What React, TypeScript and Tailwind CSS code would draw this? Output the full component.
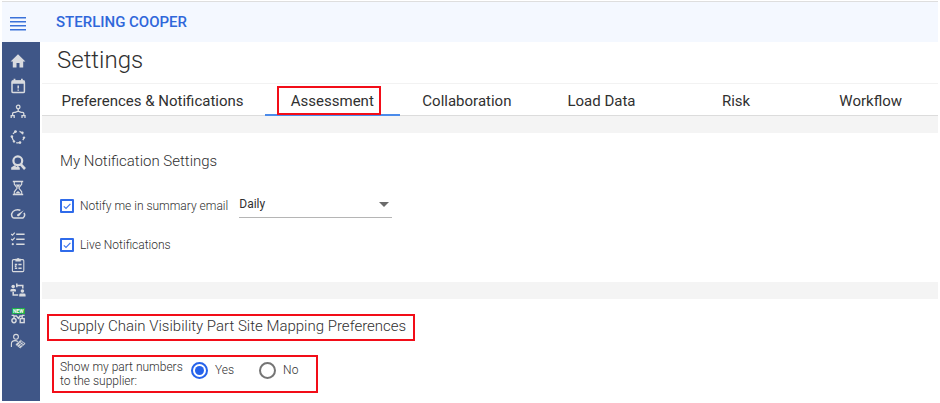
import { useState } from "react";
import type { ReactNode } from "react";

type NavItem = {
  label: string;
  icon: ReactNode;
};

const navItems: NavItem[] = [
  {
    label: "Home",
    icon: <path fill="currentColor" stroke="none" d="M8 1.2 15.4 8.4H13.2V14.6H9.5V10H6.5V14.6H2.8V8.4H.6Z" />,
  },
  {
    label: "Calendar",
    icon: (
      <>
        <rect x="2" y="3" width="12.4" height="11.6" rx="1.2" strokeWidth="1.5" />
        <path fill="currentColor" stroke="none" d="M1.8 2.6H14.6V5.8H1.8ZM3.6 .8H5.4V3H3.6ZM11 .8H12.8V3H11Z" />
        <path strokeWidth="1.5" d="M8.2 7.4V10.6M8.2 11.5V12.8" />
      </>
    ),
  },
  {
    label: "Hierarchy",
    icon: (
      <>
        <circle cx="8.2" cy="3" r="1.8" strokeWidth="1.3" />
        <path strokeWidth="1.3" d="M8.2 5V8M2.6 11V9.6Q2.6 8.4 4 8.4H5.2L8.2 7.2 11.2 8.4H12.6Q13.8 8.4 13.8 9.6V11" />
        <path strokeWidth="1.3" d="M1.2 14V11.6H4.2V14M12 14V11.6H15V14" />
      </>
    ),
  },
  {
    label: "Network",
    icon: (
      <>
        <circle cx="8" cy="8" r="5.8" strokeWidth="1.3" strokeDasharray="4.4 2.9" strokeDashoffset="1" />
        <g fill="currentColor" stroke="none">
          <circle cx="5.4" cy="2.6" r="1.3" />
          <circle cx="12.4" cy="3.6" r="1.2" />
          <circle cx="14" cy="8.6" r="1.2" />
          <circle cx="10" cy="13.6" r="1.3" />
          <circle cx="4" cy="12.4" r="1.2" />
          <circle cx="1.9" cy="7.6" r="1.3" />
        </g>
      </>
    ),
  },
  {
    label: "Supplier search",
    icon: (
      <>
        <circle cx="7.8" cy="5.8" r="4.4" strokeWidth="2.2" />
        <path strokeWidth="2.6" d="M10.8 9.4 15 14" />
        <path fill="currentColor" stroke="none" d="M1.2 14.8V12.6L4.6 10.2 6.4 12 7.8 10.8 9.8 12.8V14.8Z" />
      </>
    ),
  },
  {
    label: "Pending",
    icon: (
      <>
        <path strokeWidth="1.5" d="M2.8 1.5H13.2M2.8 14.5H13.2" />
        <path d="M4.3 2V4.2L7.2 8 4.3 11.8V14M11.7 2V4.2L8.8 8 11.7 11.8V14" />
        <path fill="currentColor" stroke="none" d="M5.6 4.5H10.4L8 7.4ZM5 13.6 8 11 11 13.6Z" />
      </>
    ),
  },
  {
    label: "Performance",
    icon: (
      <>
        <path strokeWidth="1.5" d="M3.2 12H13C14.8 10.6 15 8.6 14 6.9M10.4 4.2C7 2.9 3 4.2 1.8 7.4 1.2 9.4 2 11 3.2 12" />
        <path fill="currentColor" stroke="none" d="M13.8 4.2 9.2 10A1.3 1.3 0 0 1 7.2 8.4Z" />
      </>
    ),
  },
  {
    label: "Tasks",
    icon: (
      <>
        <path strokeWidth="1.4" d="M6.2 3.2H14.6M6.2 8.2H14.6M6.2 13.2H14.6" />
        <path strokeWidth="1.2" d="M1.2 3 2.5 4.2 4.8 1.7M1.2 8 2.5 9.2 4.8 6.7" />
        <circle cx="2.8" cy="13.2" r="1.1" fill="currentColor" stroke="none" />
      </>
    ),
  },
  {
    label: "Reports",
    icon: (
      <>
        <rect x="2.4" y="2.6" width="11.4" height="12" rx="1.2" />
        <path fill="currentColor" stroke="none" d="M5.4 1.8H6.8A1.4 1.4 0 0 1 9.4 1.8H10.8V4.4H5.4Z" />
        <path strokeWidth="1.5" d="M4.8 7.4H7.2M8.4 7.4H11.6M4.8 11.2H7.2M8.4 11.2H11.6M4.8 9.3H6.4" />
      </>
    ),
  },
  {
    label: "Collaboration",
    icon: (
      <>
        <g fill="currentColor" stroke="none">
          <circle cx="3.2" cy="4.6" r="1.8" />
          <path d="M.4 9.4V8.2Q.4 7 1.8 7H4.6Q6 7 6 8.2V9.4Z" />
          <circle cx="12.4" cy="9" r="1.8" />
          <path d="M9.2 14.4V13Q9.2 11.6 10.6 11.6H14.2Q15.6 11.6 15.6 13V14.4Z" />
        </g>
        <path strokeWidth="1.5" d="M6.4 3.4H12.8V6.4M3.2 10V13H8.2M6.8 1.6V5.2" />
      </>
    ),
  },
  {
    label: "Supply chain visibility",
    icon: (
      <>
        <circle cx="4" cy="12.6" r="2.1" strokeWidth="1.4" />
        <rect x="10.2" y="10.6" width="4" height="4" strokeWidth="1.4" />
        <path strokeWidth="1.4" d="M4 10.4V8H6.4L8.4 10.4 10 8H12.2V10.4M1.6 7.4H4M12 7.4H14.6" />
      </>
    ),
  },
  {
    label: "Partners",
    icon: (
      <>
        <circle cx="6" cy="3.8" r="2.4" />
        <path d="M1.4 14V11Q1.4 7.6 5 7.6 6.8 7.6 7.8 8.6" />
        <path fill="currentColor" strokeWidth=".6" d="M5.8 11.6 10.6 7.2 15.2 10.6 10.2 15Z" />
        <path stroke="#3f5687" strokeWidth=".7" d="M7.6 12.4 12.4 8.6M9.2 13.6 14 9.8M8.8 9.6 12.6 12.8M10.6 8.2 14 11" />
      </>
    ),
  },
];

const tabs = ["Assessment", "Collaboration", "Load Data", "Risk", "Workflow"];

function Sidebar() {
  return (
    <nav className="w-[38px] shrink-0 bg-[#3f5687] pt-[11px] pr-1.5 pb-[52px]">
      <ul className="flex h-[296px] flex-col items-center justify-between">
        {navItems.map((item) => (
          <li key={item.label} className="relative h-4 w-4">
            <a href="#" aria-label={item.label} className="block text-[#d9dbdf]">
              <svg viewBox="0 0 16 16" className="h-4 w-4" fill="none" stroke="currentColor" strokeWidth="1.1">
                {item.icon}
              </svg>
            </a>
            {item.label === "Supply chain visibility" && (
              <span className="absolute top-0 left-[2px] bg-[#1fae4b] px-px text-[5px] leading-[6px] font-bold text-white">
                NEW
              </span>
            )}
          </li>
        ))}
      </ul>
    </nav>
  );
}

type CheckboxProps = {
  id: string;
  label: string;
  checked: boolean;
  onChange: (checked: boolean) => void;
};

function Checkbox({ id, label, checked, onChange }: CheckboxProps) {
  return (
    <div className="flex items-center gap-1.5">
      <span className="relative h-[14px] w-[14px]">
        <input
          id={id}
          type="checkbox"
          checked={checked}
          onChange={(e) => onChange(e.target.checked)}
          className="block h-[14px] w-[14px] appearance-none rounded-[1px] border-2 border-[#2f6bea] bg-white"
        />
        {checked && (
          <svg viewBox="0 0 14 14" className="pointer-events-none absolute inset-0 h-[14px] w-[14px]" fill="none" stroke="#3f76ec" strokeWidth="1.2">
            <path d="M3.8 7.4 6 9.5 10.4 4.8" />
          </svg>
        )}
      </span>
      <label htmlFor={id} className="text-xs font-light">
        {label}
      </label>
    </div>
  );
}

type RadioProps = {
  label: string;
  checked: boolean;
  onChange: () => void;
};

function Radio({ label, checked, onChange }: RadioProps) {
  return (
    <label className="flex items-center gap-[7px] text-xs font-light">
      <span className="relative h-[17px] w-[17px]">
        <input
          type="radio"
          name="part-numbers"
          checked={checked}
          onChange={onChange}
          className="block h-[17px] w-[17px] appearance-none rounded-full border-2 border-[#757575] checked:border-[#2663eb]"
        />
        {checked && <span className="pointer-events-none absolute inset-1 rounded-full bg-[#2663eb]" />}
      </span>
      {label}
    </label>
  );
}

export default function App() {
  const [activeTab, setActiveTab] = useState("Assessment");
  const [summary, setSummary] = useState(true);
  const [live, setLive] = useState(true);
  const [showParts, setShowParts] = useState(true);

  return (
    <div className="bg-white px-0.5 pt-px font-[Roboto,sans-serif] text-[#303030]">
      <header className="flex h-[41px] items-center gap-[30px] border-t border-[#dedede] bg-[#f4f8ff] pl-2">
        <button aria-label="Toggle menu" className="pt-1">
          <svg viewBox="0 0 16 14" className="h-[14px] w-4" fill="none" stroke="#3b72d9" strokeWidth="1.5">
            <path d="M0 .75H16M0 4.75H16M0 8.75H16M0 12.75H16" />
          </svg>
        </button>
        <span className="text-[15px] font-medium text-[#2f67da]">STERLING COOPER</span>
      </header>

      <div className="flex gap-0.5">
        <Sidebar />

        <main className="min-w-0 flex-1">
          <h1 className="h-[41px] pl-[15px] text-2xl leading-9 font-light">Settings</h1>

          <div role="tablist" className="flex h-[33px] border-t border-b border-t-[#f2f2f2] border-b-[#dcdcdc] text-[15px]">
            <button role="tab" aria-selected={false} className="w-[223px] shrink-0 pt-[3px] pr-0.5 whitespace-nowrap">
              Preferences &amp; Notifications
            </button>
            {tabs.map((tab) => (
              <button
                key={tab}
                role="tab"
                aria-selected={tab === activeTab}
                onClick={() => setActiveTab(tab)}
                className="relative -mb-px flex-1 border-b-2 border-transparent pt-1 aria-selected:border-[#4b8bea]"
              >
                {tab}
                {tab === "Assessment" && (
                  <span className="absolute top-[2px] right-[19px] -bottom-px left-3 border-2 border-[#f20d18]" />
                )}
              </button>
            ))}
          </div>

          <div className="h-[17px] bg-[#f4f4f4]" />

          <section className="h-[149px] pt-[18px] pl-[18px]">
            <h2 className="text-[15px] leading-5 font-light">My Notification Settings</h2>
            <div className="mt-[23px] flex items-center gap-[11px]">
              <Checkbox id="summary" label="Notify me in summary email" checked={summary} onChange={setSummary} />
              <div className="relative">
                <select
                  aria-label="Summary frequency"
                  className="block h-6 w-[153px] appearance-none border-b border-[#b5b5b5] pb-1 text-xs"
                >
                  <option>Daily</option>
                  <option>Weekly</option>
                  <option>Monthly</option>
                </select>
                <svg viewBox="0 0 10 5" className="pointer-events-none absolute top-2 right-[3px] h-[5px] w-[10px]" fill="#6b6b6b">
                  <path d="M0 0H10L5 5Z" />
                </svg>
              </div>
            </div>
            <div className="mt-[19px]">
              <Checkbox id="live" label="Live Notifications" checked={live} onChange={setLive} />
            </div>
          </section>

          <div className="h-[17px] bg-[#f4f4f4]" />

          <section className="flex flex-col items-start gap-[14px] pt-[15px] pl-[5px]">
            <h2 className="border-2 border-[#f20d18] pr-[7px] pb-0.5 pl-[11px] text-[15px] leading-[21px] font-light">
              Supply Chain Visibility Part Site Mapping Preferences
            </h2>
            <div
              role="radiogroup"
              aria-labelledby="part-numbers-label"
              className="ml-[5px] flex h-[38px] items-center border-2 border-[#f20d18] pr-[18px] pl-1.5"
            >
              <span id="part-numbers-label" className="w-[131px] text-xs leading-[14px] font-light">
                Show my part numbers to the supplier:
              </span>
              <div className="flex gap-[25px] pb-2">
                <Radio label="Yes" checked={showParts} onChange={() => setShowParts(true)} />
                <Radio label="No" checked={!showParts} onChange={() => setShowParts(false)} />
              </div>
            </div>
          </section>
        </main>
      </div>
    </div>
  );
}
